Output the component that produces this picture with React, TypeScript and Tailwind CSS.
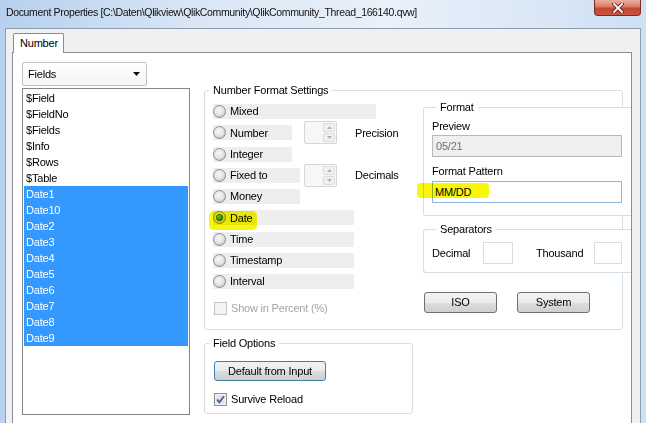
import React from "react";

const fields = ["$Field", "$FieldNo", "$Fields", "$Info", "$Rows", "$Table"];
const dates = ["Date1", "Date10", "Date2", "Date3", "Date4", "Date5", "Date6", "Date7", "Date8", "Date9"];

const formats = [
  { label: "Mixed", bar: "w-[163px]" },
  { label: "Number", bar: "w-[79px]", spin: "Precision" },
  { label: "Integer", bar: "w-[79px]" },
  { label: "Fixed to", bar: "w-[87px]", spin: "Decimals" },
  { label: "Money", bar: "w-[87px]" },
  { label: "Date", bar: "w-[141px]", checked: true },
  { label: "Time", bar: "w-[141px]" },
  { label: "Timestamp", bar: "w-[141px]" },
  { label: "Interval", bar: "w-[141px]" },
];

const btn =
  "flex items-center justify-center rounded-[3px] border bg-[linear-gradient(#f2f2f2_0%,#ebebeb_50%,#dddddd_51%,#cfcfcf_100%)] text-[11px]";

const Radio = ({ checked }: { checked?: boolean }) => (
  <svg width="13" height="13" viewBox="0 0 13 13" className="shrink-0">
    <defs>
      <radialGradient id="rad" cx="45%" cy="40%" r="65%">
        <stop offset="0" stopColor="#f6f6f6" />
        <stop offset="0.6" stopColor="#e2e3e4" />
        <stop offset="1" stopColor="#b9bbbd" />
      </radialGradient>
      <radialGradient id="dot" cx="40%" cy="35%" r="70%">
        <stop offset="0" stopColor="#7fd35a" />
        <stop offset="1" stopColor="#146d14" />
      </radialGradient>
    </defs>
    <circle cx="6.5" cy="6.5" r="6" fill="url(#rad)" stroke="#8d9092" />
    {checked && <circle cx="6.5" cy="6.5" r="3.2" fill="url(#dot)" stroke="#0e4f0e" strokeWidth="0.6" />}
  </svg>
);

const Check = ({ checked, disabled }: { checked?: boolean; disabled?: boolean }) => (
  <svg width="13" height="13" viewBox="0 0 13 13" className="shrink-0">
    <rect x="0.5" y="0.5" width="12" height="12" fill={disabled ? "#f4f4f4" : "#eef0f3"} stroke={disabled ? "#c4c4c4" : "#8e8f8f"} />
    {!disabled && <rect x="2.5" y="2.5" width="8" height="8" fill="#dde2ea" />}
    {checked && <path d="M3 6.5 L5.3 9.3 L10 3.2" fill="none" stroke="#4a5d82" strokeWidth="1.8" />}
  </svg>
);

const Spin = () => (
  <div className="flex h-[23px] w-[33px] rounded-[2px] border border-[#d6d6d6] bg-[#f7f7f7]">
    <div className="flex-1" />
    <div className="my-[1px] mr-[1px] flex w-[12px] flex-col gap-[1px]">
      <div className="flex flex-1 items-center justify-center rounded-[2px] border border-[#dcdcdc] bg-[#f1f1f1]">
        <svg width="5" height="3" viewBox="0 0 5 3"><path d="M0 3 L2.5 0 L5 3 Z" fill="#b3b3b3" /></svg>
      </div>
      <div className="flex flex-1 items-center justify-center rounded-[2px] border border-[#dcdcdc] bg-[#f1f1f1]">
        <svg width="5" height="3" viewBox="0 0 5 3"><path d="M0 0 L2.5 3 L5 0 Z" fill="#b3b3b3" /></svg>
      </div>
    </div>
  </div>
);

const Legend = ({ children }: { children: React.ReactNode }) => (
  <legend className="ml-[4px] px-[4px] text-[11px] leading-[14px]">{children}</legend>
);

export default function App() {
  return (
    <div className="flex h-[423px] w-[646px] flex-col overflow-hidden bg-[linear-gradient(90deg,#b6d0ee_0%,#d9e6f5_30%,#e9f1fa_60%,#cfe0f3_100%)] font-['Liberation_Sans',Arial,sans-serif] tracking-[-0.2px] text-black">
      {/* title bar */}
      <div className="flex h-[28px] shrink-0 items-start justify-between">
        <div className="pl-[6px] pt-[5px] text-[10.5px] leading-[15px] tracking-[-0.35px] text-[#111]">
          Document Properties [C:\Daten\Qlikview\QlikCommunity\QlikCommunity_Thread_166140.qvw]
        </div>
        <div className="mr-[5px] flex h-[16px] w-[47px] items-center justify-center rounded-b-[4px] border border-t-0 border-[#7b2c22] bg-[linear-gradient(#eab0a2_0%,#d77a67_45%,#c5452f_55%,#c8553f_100%)]">
          <svg width="12" height="10" viewBox="0 0 12 10">
            <path d="M2 1 L10 9 M10 1 L2 9" stroke="#5a1c14" strokeWidth="3.4" strokeLinecap="square" />
            <path d="M2 1 L10 9 M10 1 L2 9" stroke="#ffffff" strokeWidth="1.8" strokeLinecap="square" />
          </svg>
        </div>
      </div>

      {/* window body */}
      <div className="flex flex-1 px-[5px]">
        <div className="flex flex-1 flex-col border border-b-0 border-[#8c9eb3] bg-[#f0f0f0] pl-[6px] pr-[8px]">
          {/* tabs */}
          <div className="flex pl-[1px] pt-[4px]">
            <div className="relative z-10 -mb-px flex h-[20px] w-[51px] items-center rounded-t-[2px] border border-b-0 border-[#898c95] bg-white pl-[6px] text-[11px]">
              Number
            </div>
          </div>

          {/* panel */}
          <div className="flex flex-1 overflow-hidden border border-b-0 border-[#898c95] bg-white pl-[9px] pt-[9px]">
            {/* left column */}
            <div className="flex w-[168px] shrink-0 flex-col">
              <div className="flex h-[24px] w-[125px] items-center justify-between rounded-[2px] border border-[#c3c3c3] bg-[linear-gradient(#ffffff,#f5f5f5)] pl-[5px] pr-[6px] text-[11px]">
                <span>Fields</span>
                <svg width="7" height="4" viewBox="0 0 7 4"><path d="M0 0 L7 0 L3.5 4 Z" fill="#111" /></svg>
              </div>
              <div className="mt-[2px] h-[327px] border border-[#828790] bg-white p-[1px] text-[11px]">
                {fields.map((f) => (
                  <div key={f} className="h-[16px] pl-[2px] leading-[16px]">
                    {f}
                  </div>
                ))}
                {dates.map((d) => (
                  <div key={d} className="h-[16px] bg-[#3399ff] pl-[2px] leading-[16px] text-white">
                    {d}
                  </div>
                ))}
              </div>
            </div>

            {/* right side */}
            <div className="ml-[14px] flex flex-col">
              <fieldset className="mt-[21px] h-[247px] w-[419px] min-w-0 rounded-[3px] border border-[#d5dfe5]">
                <Legend>Number Format Settings</Legend>
                <div className="flex">
                  {/* radios */}
                  <div className="flex w-[218px] shrink-0 flex-col pl-[8px] pt-[4px] text-[11px]">
                    {formats.map((r) => {
                      const bar = (
                        <div className={`flex h-[15px] items-center gap-[4px] bg-[#eeeeee] ${r.bar}`}>
                          <Radio checked={r.checked} />
                          <span>{r.label}</span>
                        </div>
                      );
                      return (
                        <div key={r.label} className="relative flex h-[21.25px] items-center">
                          {r.spin ? (
                            <>
                              <div className="w-[91px]">{bar}</div>
                              <Spin />
                              <span className="ml-[18px]">{r.spin}</span>
                            </>
                          ) : (
                            bar
                          )}
                          {r.checked && (
                            <div className="pointer-events-none absolute left-[-4px] top-[4px] h-[19px] w-[48px] rounded-[5px] bg-[#f8f60a] mix-blend-multiply" />
                          )}
                        </div>
                      );
                    })}
                    <div className="mt-[8px] flex items-center gap-[4px] pl-[1px] text-[#a3a3a3]">
                      <Check disabled />
                      <span>Show in Percent (%)</span>
                    </div>
                  </div>

                  {/* format side */}
                  <div className="flex w-[210px] shrink-0 flex-col pt-[3px] text-[11px]">
                    <fieldset className="h-[116px] min-w-0 rounded-l-[3px] border border-r-0 border-[#d5dfe5] bg-white pl-[8px]">
                      <Legend>Format</Legend>
                      <div className="mt-[4px] leading-[16px]">Preview</div>
                      <div className="mt-[1px] flex h-[22px] w-[190px] items-center border border-[#b9b9b9] bg-[#efefef] pl-[3px] text-[#707070]">
                        05/21
                      </div>
                      <div className="mt-[6px] leading-[16px]">Format Pattern</div>
                      <div className="relative mt-[2px] flex h-[22px] w-[190px] items-center border border-[#92b4d8] bg-white pl-[2px]">
                        MM/DD
                        <div className="pointer-events-none absolute left-[-16px] top-[1px] h-[15px] w-[72px] rounded-[4px] bg-[#f8f60a] mix-blend-multiply" />
                      </div>
                    </fieldset>
                    <fieldset className="mt-[6px] h-[51px] min-w-0 rounded-l-[3px] border border-r-0 border-[#d5dfe5] bg-white pl-[8px]">
                      <Legend>Separators</Legend>
                      <div className="mt-[6px] flex items-center">
                        <span className="w-[51px]">Decimal</span>
                        <div className="h-[22px] w-[30px] border border-[#d8dde3] bg-white" />
                        <span className="ml-[23px] w-[58px]">Thousand</span>
                        <div className="h-[22px] w-[28px] border border-[#d8dde3] bg-white" />
                      </div>
                    </fieldset>
                    <div className="ml-[1px] mt-[19px] flex gap-[20px]">
                      <div className={`${btn} h-[21px] w-[73px] border-[#707070]`}>ISO</div>
                      <div className={`${btn} h-[21px] w-[73px] border-[#707070]`}>System</div>
                    </div>
                  </div>
                </div>
              </fieldset>

              <fieldset className="mt-[6px] h-[78px] w-[209px] min-w-0 rounded-[3px] border border-[#d5dfe5]">
                <Legend>Field Options</Legend>
                <div className="flex flex-col pl-[9px] text-[11px]">
                  <div className={`${btn} mt-[11px] h-[20px] w-[112px] border-[#3c7fb1]`}>Default from Input</div>
                  <div className="mt-[10px] flex items-center gap-[4px]">
                    <Check checked />
                    <span>Survive Reload</span>
                  </div>
                </div>
              </fieldset>
            </div>
          </div>
        </div>
      </div>
    </div>
  );
}
